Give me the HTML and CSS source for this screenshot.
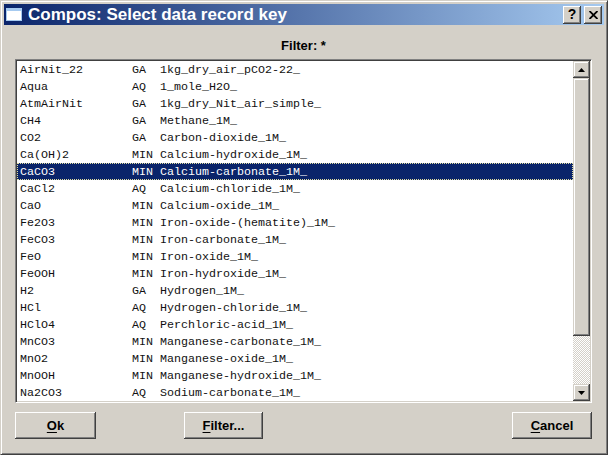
FILE: index.html
```html
<!DOCTYPE html>
<html>
<head>
<meta charset="utf-8">
<link rel="stylesheet" href="styles.css">
</head>
<body>
<div class="window">
  <div class="titlebar">
    <svg class="app-icon" width="16" height="13" viewBox="0 0 16 13">
      <rect x="0.5" y="0.5" width="15" height="12" fill="#fff" stroke="#a6caf0"/>
      <rect x="1" y="1" width="14" height="2" fill="#a6caf0"/>
    </svg>
    <span class="title">Compos: Select data record key</span>
    <div class="title-buttons">
      <div class="tbtn help">?</div>
      <div class="tbtn close">
        <svg width="9" height="8" viewBox="0 0 9 8"><path d="M0.5 0 L8.5 8 M8.5 0 L0.5 8" stroke="#000" stroke-width="1.8"/></svg>
      </div>
    </div>
  </div>
  <div class="body">
    <div class="filter-label">Filter: *</div>
    <div class="listbox">
      <div class="rows">
        <div class="row"><span>AirNit_22</span><span>GA</span><span>1kg_dry_air_pCO2-22_</span></div>
        <div class="row"><span>Aqua</span><span>AQ</span><span>1_mole_H2O_</span></div>
        <div class="row"><span>AtmAirNit</span><span>GA</span><span>1kg_dry_Nit_air_simple_</span></div>
        <div class="row"><span>CH4</span><span>GA</span><span>Methane_1M_</span></div>
        <div class="row"><span>CO2</span><span>GA</span><span>Carbon-dioxide_1M_</span></div>
        <div class="row"><span>Ca(OH)2</span><span>MIN</span><span>Calcium-hydroxide_1M_</span></div>
        <div class="row selected"><span>CaCO3</span><span>MIN</span><span>Calcium-carbonate_1M_</span></div>
        <div class="row"><span>CaCl2</span><span>AQ</span><span>Calcium-chloride_1M_</span></div>
        <div class="row"><span>CaO</span><span>MIN</span><span>Calcium-oxide_1M_</span></div>
        <div class="row"><span>Fe2O3</span><span>MIN</span><span>Iron-oxide-(hematite)_1M_</span></div>
        <div class="row"><span>FeCO3</span><span>MIN</span><span>Iron-carbonate_1M_</span></div>
        <div class="row"><span>FeO</span><span>MIN</span><span>Iron-oxide_1M_</span></div>
        <div class="row"><span>FeOOH</span><span>MIN</span><span>Iron-hydroxide_1M_</span></div>
        <div class="row"><span>H2</span><span>GA</span><span>Hydrogen_1M_</span></div>
        <div class="row"><span>HCl</span><span>AQ</span><span>Hydrogen-chloride_1M_</span></div>
        <div class="row"><span>HClO4</span><span>AQ</span><span>Perchloric-acid_1M_</span></div>
        <div class="row"><span>MnCO3</span><span>MIN</span><span>Manganese-carbonate_1M_</span></div>
        <div class="row"><span>MnO2</span><span>MIN</span><span>Manganese-oxide_1M_</span></div>
        <div class="row"><span>MnOOH</span><span>MIN</span><span>Manganese-hydroxide_1M_</span></div>
        <div class="row"><span>Na2CO3</span><span>AQ</span><span>Sodium-carbonate_1M_</span></div>
      </div>
      <div class="scrollbar">
        <div class="sb-btn"><svg width="7" height="4" viewBox="0 0 7 4"><path d="M3.5 0 L7 4 L0 4 Z" fill="#000"/></svg></div>
        <div class="sb-thumb"></div>
        <div class="sb-track"></div>
        <div class="sb-btn"><svg width="7" height="4" viewBox="0 0 7 4"><path d="M0 0 L7 0 L3.5 4 Z" fill="#000"/></svg></div>
      </div>
    </div>
    <div class="buttons">
      <div class="btn ok"><u>O</u>k</div>
      <div class="btn filter"><u>F</u>ilter...</div>
      <div class="btn cancel"><u>C</u>ancel</div>
    </div>
  </div>
</div>
</body>
</html>
```
FILE: styles.css
```css
html, body {
  margin: 0;
  padding: 0;
}
body {
  width: 608px;
  height: 455px;
  overflow: hidden;
  background: #d4d0c8;
  font-family: "Liberation Sans", Arial, sans-serif;
}
.window {
  box-sizing: border-box;
  width: 608px;
  height: 455px;
  background: #d4d0c8;
  border: 1px solid;
  border-color: #d4d0c8 #404040 #404040 #d4d0c8;
  box-shadow: inset 1px 1px #fff, inset -1px -1px #808080;
  padding: 3px;
  display: flex;
  flex-direction: column;
}
.titlebar {
  height: 21px;
  flex: none;
  background: linear-gradient(to right, #0a246a, #a6caf0);
  display: flex;
  align-items: center;
  padding: 0 2px;
  color: #fff;
}
.app-icon {
  flex: none;
  margin-right: 6px;
}
.title {
  font-weight: bold;
  font-size: 17px;
  line-height: 21px;
  white-space: nowrap;
  flex: 1;
}
.title-buttons {
  display: flex;
  gap: 3px;
}
.tbtn {
  box-sizing: border-box;
  width: 18px;
  height: 18px;
  background: #d4d0c8;
  box-shadow: inset -1px -1px #404040, inset 1px 1px #fff, inset -2px -2px #808080;
  display: flex;
  align-items: center;
  justify-content: center;
  color: #000;
}
.tbtn.help {
  font-weight: bold;
  font-size: 14px;
  line-height: 14px;
  padding-bottom: 1px;
}
.body {
  flex: 1;
  display: flex;
  flex-direction: column;
  padding: 12px 12px 12px 11px;
}
.filter-label {
  font-weight: bold;
  font-size: 13px;
  line-height: 16px;
  height: 16px;
  padding-top: 1px;
  text-align: center;
  color: #000;
  margin-bottom: 5px;
}
.listbox {
  box-sizing: border-box;
  height: 344px;
  flex: none;
  display: flex;
  background: #fff;
  border: 1px solid;
  border-color: #808080 #fff #fff #808080;
  box-shadow: inset 1px 1px #404040, inset -1px -1px #d4d0c8;
  padding: 1px;
}
.rows {
  flex: 1;
  font-family: "Liberation Mono", "Courier New", monospace;
  font-size: 11.667px;
  line-height: 17px;
  color: #111;
}
.row {
  box-sizing: border-box;
  display: grid;
  grid-template-columns: 112px 28px 1fr;
  height: 17px;
  padding-left: 3px;
  padding-top: 1px;
  line-height: 16px;
  white-space: pre;
}
.row.selected {
  background: #0a246a;
  color: #fff;
  outline: 1px dotted #e0dca0;
  outline-offset: -1px;
}
.scrollbar {
  width: 17px;
  flex: none;
  display: flex;
  flex-direction: column;
}
.sb-btn, .sb-thumb {
  box-sizing: border-box;
  background: #d4d0c8;
  box-shadow: inset -1px -1px #404040, inset 1px 1px #d4d0c8, inset -2px -2px #808080, inset 2px 2px #fff;
}
.sb-btn {
  height: 17px;
  flex: none;
  display: flex;
  align-items: center;
  justify-content: center;
}
.sb-thumb {
  height: 258px;
  flex: none;
}
.sb-track {
  flex: 1;
  background: repeating-conic-gradient(#fff 0 25%, #d4d0c8 0 50%) 0 0 / 2px 2px;
}
.buttons {
  margin-top: 9px;
  height: 27px;
  flex: none;
  display: flex;
}
.btn {
  box-sizing: border-box;
  height: 27px;
  background: #d4d0c8;
  box-shadow: inset -1px -1px #404040, inset 1px 1px #fff, inset -2px -2px #808080;
  font-weight: bold;
  font-size: 13px;
  color: #000;
  display: flex;
  align-items: center;
  justify-content: center;
  padding-bottom: 1px;
}
.btn u {
  text-decoration-thickness: 1px;
  text-underline-offset: 2px;
}
.btn.ok {
  width: 81px;
}
.btn.filter {
  width: 79px;
  margin-left: 88px;
}
.btn.cancel {
  width: 80px;
  margin-left: auto;
}
```
